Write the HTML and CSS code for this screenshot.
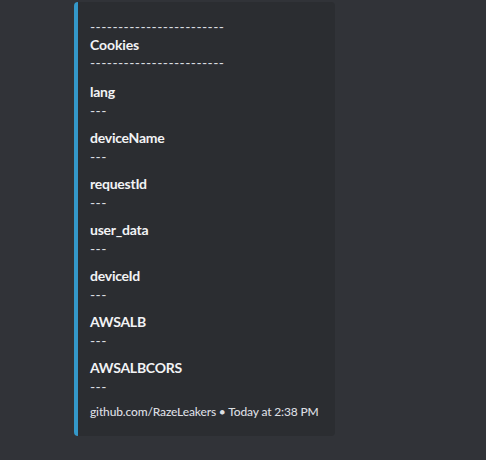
FILE: index.html
```html
<!DOCTYPE html>
<html>
<head>
<meta charset="utf-8">
<link rel="stylesheet" href="styles.css">
</head>
<body>
<article class="embed">
  <div class="description">
    <div class="dashes">------------------------</div>
    <div class="strong">Cookies</div>
    <div class="dashes">------------------------</div>
  </div>
  <div class="fields">
    <div class="field"><div class="field-name">lang</div><div class="field-value">---</div></div>
    <div class="field"><div class="field-name">deviceName</div><div class="field-value">---</div></div>
    <div class="field"><div class="field-name">requestId</div><div class="field-value">---</div></div>
    <div class="field"><div class="field-name">user_data</div><div class="field-value">---</div></div>
    <div class="field"><div class="field-name">deviceId</div><div class="field-value">---</div></div>
    <div class="field"><div class="field-name">AWSALB</div><div class="field-value">---</div></div>
    <div class="field"><div class="field-name">AWSALBCORS</div><div class="field-value">---</div></div>
  </div>
  <div class="footer">github.com/RazeLeakers <span class="sep">•</span> Today at 2:38 PM</div>
</article>
</body>
</html>
```
FILE: styles.css
```css
html, body {
  margin: 0;
  padding: 0;
  background: #313338;
  height: 100%;
}
body {
  font-family: "Lato", "Noto Sans", sans-serif;
  color: #dbdee1;
  padding-top: 2px;
  box-sizing: border-box;
}
.embed {
  margin-left: 74px;
  width: 261px;
  box-sizing: border-box;
  background: #2b2d31;
  border-left: 4px solid #3498c9;
  border-radius: 4px;
  padding: 8px 16px 16px 12px;
}
.description {
  margin-top: 8px;
  font-size: 14px;
  line-height: 18px;
  color: #dbdee1;
}
.dashes {
  letter-spacing: 0.4px;
  white-space: nowrap;
}
.strong {
  font-weight: 700;
  color: #f2f3f5;
  letter-spacing: -0.1px;
}
.fields {
  margin-top: 11px;
  display: flex;
  flex-direction: column;
  gap: 9px;
}
.field-name {
  font-size: 14px;
  line-height: 18px;
  font-weight: 700;
  color: #f2f3f5;
  letter-spacing: -0.25px;
}
.field-value {
  margin-top: 1px;
  font-size: 14px;
  line-height: 18px;
  color: #dbdee1;
  letter-spacing: 0.4px;
}
.footer {
  margin-top: 8px;
  font-size: 12px;
  line-height: 16px;
  font-weight: 500;
  color: #dbdee1;
  letter-spacing: -0.15px;
  white-space: nowrap;
}
.sep {
  letter-spacing: 0;
}
```
